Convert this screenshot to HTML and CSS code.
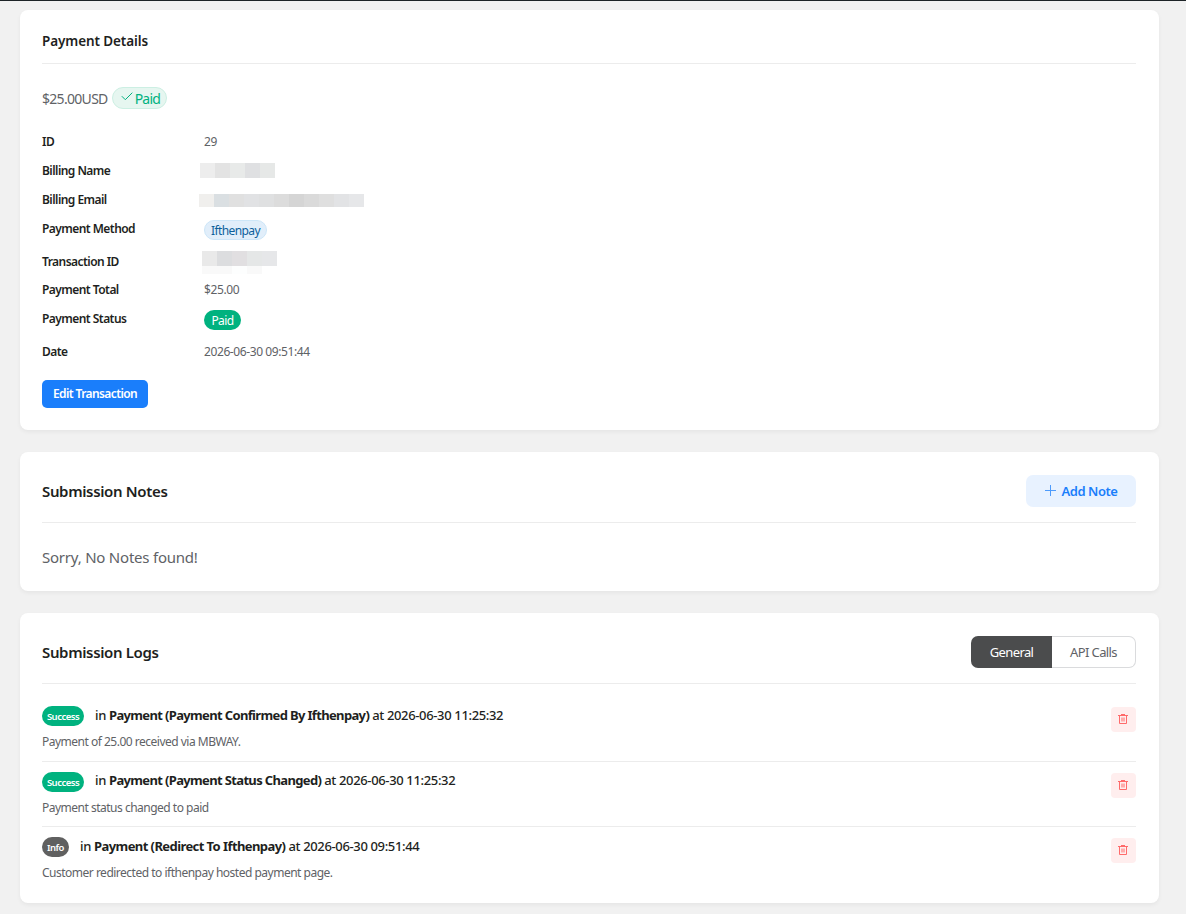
FILE: index.html
```html
<!DOCTYPE html>
<html lang="en">
<head>
    <meta charset="UTF-8">
    <meta name="viewport" content="width=device-width, initial-scale=1.0">
    <title>Payment Details</title>
    <link rel="stylesheet" href="styles.css">
</head>
<body>

    <div class="entry-page">

        <!-- Payment details -->
        <div class="card payment-card">
            <div class="card-head">
                <h2 class="card-title small">Payment Details</h2>
            </div>
            <div class="amount-line">
                <span class="amount">$25.00USD</span>
                <span class="paid-tag">
                    <svg width="12" height="9" viewBox="0 0 12 9" fill="none" stroke="currentColor" stroke-width="1"><path d="M0.8 4.2 L4.3 7.7 L11.3 0.7"/></svg>
                    <span>Paid</span>
                </span>
            </div>
            <ul class="details">
                <li><span class="label">ID</span><span class="value">29</span></li>
                <li>
                    <span class="label">Billing Name</span>
                    <span class="masked masked-name"><i></i><i></i><i></i><i></i><i></i></span>
                </li>
                <li>
                    <span class="label">Billing Email</span>
                    <span class="masked masked-email"><i></i><i></i><i></i><i></i><i></i><i></i><i></i><i></i><i></i><i></i><i></i></span>
                </li>
                <li class="tall"><span class="label">Payment Method</span><span class="badge badge-method">Ifthenpay</span></li>
                <li class="short">
                    <span class="label">Transaction ID</span>
                    <span class="masked masked-id"><i></i><i></i><i></i><i></i><i></i><i></i><i></i><i></i><i></i><i></i></span>
                </li>
                <li><span class="label">Payment Total</span><span class="value">$25.00</span></li>
                <li class="tall"><span class="label">Payment Status</span><span class="badge badge-paid">Paid</span></li>
                <li><span class="label">Date</span><span class="value">2026-06-30 09:51:44</span></li>
            </ul>
            <button class="btn-edit">Edit Transaction</button>
        </div>

        <!-- Notes -->
        <div class="card notes-card">
            <div class="card-head with-action">
                <h2 class="card-title">Submission Notes</h2>
                <button class="btn-note">
                    <svg width="11" height="11" viewBox="0 0 11 11" stroke="currentColor" stroke-width="1"><path d="M5.5 0V11M0 5.5H11"/></svg>
                    <span>Add Note</span>
                </button>
            </div>
            <p class="empty">Sorry, No Notes found!</p>
        </div>

        <!-- Logs -->
        <div class="card logs-card">
            <div class="card-head with-action">
                <h2 class="card-title">Submission Logs</h2>
                <div class="tabs">
                    <button class="tab active">General</button>
                    <button class="tab">API Calls</button>
                </div>
            </div>
            <div class="log">
                <div class="log-body">
                    <div class="log-title">
                        <span class="status success">Success</span>
                        <span class="log-text">in <b>Payment (Payment Confirmed By Ifthenpay)</b> at 2026-06-30 11:25:32</span>
                    </div>
                    <p class="log-desc">Payment of 25.00 received via MBWAY.</p>
                </div>
                <button class="btn-delete" aria-label="Delete">
                    <svg width="10" height="10" viewBox="0 0 10 10" fill="none" stroke="currentColor" stroke-width="1"><path d="M0 1.5H10M3 0.5H7M1.5 2V9.5H8.5V2M4 3.5V7.5M6 3.5V7.5"/></svg>
                </button>
            </div>
            <div class="log">
                <div class="log-body">
                    <div class="log-title">
                        <span class="status success">Success</span>
                        <span class="log-text">in <b>Payment (Payment Status Changed)</b> at 2026-06-30 11:25:32</span>
                    </div>
                    <p class="log-desc">Payment status changed to paid</p>
                </div>
                <button class="btn-delete" aria-label="Delete">
                    <svg width="10" height="10" viewBox="0 0 10 10" fill="none" stroke="currentColor" stroke-width="1"><path d="M0 1.5H10M3 0.5H7M1.5 2V9.5H8.5V2M4 3.5V7.5M6 3.5V7.5"/></svg>
                </button>
            </div>
            <div class="log">
                <div class="log-body">
                    <div class="log-title">
                        <span class="status info">Info</span>
                        <span class="log-text">in <b>Payment (Redirect To Ifthenpay)</b> at 2026-06-30 09:51:44</span>
                    </div>
                    <p class="log-desc">Customer redirected to ifthenpay hosted payment page.</p>
                </div>
                <button class="btn-delete" aria-label="Delete">
                    <svg width="10" height="10" viewBox="0 0 10 10" fill="none" stroke="currentColor" stroke-width="1"><path d="M0 1.5H10M3 0.5H7M1.5 2V9.5H8.5V2M4 3.5V7.5M6 3.5V7.5"/></svg>
                </button>
            </div>
        </div>

    </div>

</body>
</html>
```

FILE: styles.css
```css
* {
    margin: 0;
    padding: 0;
    box-sizing: border-box;
}
body {
    height: 914px;
    overflow: hidden;
    background: #f1f1f1;
    border-top: 1px solid #1d2327;
    font-family: 'Segoe UI', 'Noto Sans', sans-serif;
    font-size: 12px;
    color: #1e1f21;
}
button {
    font-family: inherit;
    border: none;
    cursor: pointer;
}
.entry-page {
    display: flex;
    flex-direction: column;
    gap: 22px;
    padding: 9px 27px 0 20px;
}
.card {
    background: #fff;
    border-radius: 8px;
    padding: 0 23px 0 22px;
    box-shadow: 0 2px 4px rgba(0, 0, 0, 0.05);
}
.payment-card {
    height: 420px;
}
.notes-card {
    height: 139px;
}
.logs-card {
    height: 290px;
}
.card-head {
    display: flex;
    align-items: center;
    justify-content: space-between;
    height: 54px;
    padding-top: 9px;
    border-bottom: 1px solid #ececec;
}
.card-head.with-action {
    height: 71px;
    padding-top: 8px;
}
.card-title {
    font-size: 15px;
    font-weight: 600;
    letter-spacing: -0.35px;
}
.card-title.small {
    font-size: 13.5px;
    letter-spacing: -0.1px;
}

/* amount */
.amount-line {
    display: flex;
    align-items: center;
    gap: 4px;
    height: 22px;
    margin-top: 23px;
}
.amount {
    font-size: 14px;
    letter-spacing: -0.7px;
    color: #606266;
}
.paid-tag {
    display: flex;
    align-items: center;
    gap: 2px;
    width: 55px;
    height: 22px;
    padding-left: 8px;
    border: 1px solid #ccefe3;
    border-radius: 11px;
    background: #e6f6f0;
    color: #00b27f;
    font-size: 14px;
    letter-spacing: -0.75px;
}
.paid-tag svg {
    margin-bottom: 3px;
}

/* details list */
.details {
    list-style: none;
    margin-top: 18px;
}
.details li {
    display: flex;
    height: 29px;
    line-height: 29px;
}
.details li.tall {
    height: 33px;
}
.details li.short {
    height: 28px;
}
.label {
    width: 162px;
    font-weight: 600;
    letter-spacing: -0.55px;
}
.value {
    color: #606266;
    letter-spacing: -0.4px;
}
.badge {
    height: 20px;
    margin-top: 6px;
    border-radius: 10px;
    line-height: 20px;
    text-align: center;
    letter-spacing: -0.6px;
}
.badge-method {
    width: 63px;
    border: 1px solid #cde6f8;
    background: #e1eefa;
    color: #0d609b;
}
.badge-paid {
    width: 37px;
    background: #00b27f;
    color: #fff;
    line-height: 21px;
}

/* masked values */
.masked {
    display: grid;
    grid-auto-rows: 15px;
    align-content: start;
}
.masked-name {
    grid-template-columns: repeat(5, 15px);
    margin: 7px 0 0 -4px;
}
.masked-email {
    grid-template-columns: repeat(11, 15px);
    grid-auto-rows: 13px;
    margin: 9px 0 0 -5px;
}
.masked-id {
    grid-template-columns: repeat(5, 15px);
    grid-template-rows: 15px 8px;
    margin: 4px 0 0 -2px;
}
.masked i { background: #e7e9e9; }
.masked-name i:nth-child(1) { background: #ededed; }
.masked-name i:nth-child(2) { background: #e3e3e3; }
.masked-name i:nth-child(3) { background: #e8eae9; }
.masked-name i:nth-child(4) { background: #dfe0e2; }
.masked-name i:nth-child(5) { background: #e6e8e7; }
.masked-email i:nth-child(1) { background: #f0efed; }
.masked-email i:nth-child(2) { background: #dadfe2; }
.masked-email i:nth-child(3) { background: #e0e0e0; }
.masked-email i:nth-child(4) { background: #e1e2e4; }
.masked-email i:nth-child(5) { background: #dfe0e1; }
.masked-email i:nth-child(6) { background: #dcdcdc; }
.masked-email i:nth-child(7) { background: #d5d5d5; }
.masked-email i:nth-child(8) { background: #dadada; }
.masked-email i:nth-child(9) { background: #dfdfdf; }
.masked-email i:nth-child(10) { background: #e2e3e5; }
.masked-email i:nth-child(11) { background: #e6e7e9; }
.masked-id i:nth-child(1) { background: #e9e9e9; }
.masked-id i:nth-child(2) { background: #dcdddf; }
.masked-id i:nth-child(3) { background: #e1dfe1; }
.masked-id i:nth-child(4) { background: #e5e7e7; }
.masked-id i:nth-child(5) { background: #e6e7e9; }
.masked-id i:nth-child(n+6) { background: #f9f9f9; }
.masked-id i:nth-child(8) { background: #fdfefe; }
.masked-id i:nth-child(10) { background: #fff; }

.btn-edit {
    display: block;
    width: 106px;
    height: 28px;
    margin-top: 14px;
    padding-bottom: 1px;
    border-radius: 5px;
    background: #1a7efb;
    color: #fff;
    font-size: 12px;
    font-weight: 600;
    letter-spacing: -0.6px;
}

/* notes */
.btn-note {
    display: flex;
    align-items: center;
    justify-content: center;
    gap: 5px;
    width: 110px;
    height: 32px;
    padding-left: 1px;
    border-radius: 7px;
    background: #e8f2ff;
    color: #1a7efb;
    font-size: 13px;
    font-weight: 600;
    letter-spacing: -0.45px;
}
.btn-note svg {
    margin-bottom: 2px;
    opacity: 0.75;
}
.empty {
    margin-top: 23px;
    font-size: 15px;
    line-height: 22px;
    letter-spacing: -0.22px;
    color: #606266;
}

/* logs */
.tabs {
    display: flex;
    height: 32px;
}
.tab {
    width: 84px;
    border: 1px solid #dadbdd;
    border-left: none;
    border-radius: 0 7px 7px 0;
    background: #fff;
    color: #606266;
    font-size: 13px;
    letter-spacing: -0.6px;
}
.tab.active {
    width: 81px;
    border: none;
    border-radius: 7px 0 0 7px;
    background: #4b4c4d;
    color: #fff;
}
.log {
    display: flex;
    justify-content: space-between;
    height: 65px;
    padding-top: 10px;
    border-bottom: 1px solid #ececec;
}
.card-head + .log {
    height: 78px;
    padding-top: 22px;
}
.log:last-child {
    height: 66px;
    border-bottom: none;
}
.log-title {
    display: flex;
    height: 20px;
}
.status {
    height: 20px;
    margin-right: 11px;
    border-radius: 10px;
    color: #fff;
    font-size: 9.5px;
    font-weight: 600;
    line-height: 21px;
    text-align: center;
    letter-spacing: -0.5px;
}
.success {
    width: 42px;
    background: #00b27f;
}
.info {
    width: 27px;
    background: #606060;
}
.log-text {
    font-size: 13px;
    font-weight: 500;
    line-height: 18px;
    letter-spacing: -0.35px;
}
.log + .log .log-text {
    line-height: 17px;
}
.log + .log:last-child .log-text {
    line-height: 19px;
}
.log-text b {
    font-weight: 700;
    letter-spacing: -0.65px;
}
.log:last-child .log-text b {
    letter-spacing: -0.58px;
}
.log-desc {
    margin-top: 7px;
    line-height: 18px;
    letter-spacing: -0.5px;
    color: #606266;
}
.btn-delete {
    display: flex;
    align-items: center;
    justify-content: center;
    width: 25px;
    height: 25px;
    margin-top: 1px;
    padding: 0 1px 1px 0;
    border-radius: 4px;
    background: #ffeeee;
    color: #ff6b6b;
}
```
